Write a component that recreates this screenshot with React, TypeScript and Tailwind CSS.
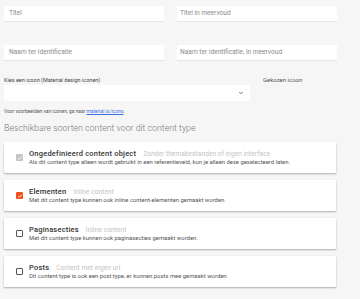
import React from "react";

const font = { fontFamily: "Roboto, 'Noto Sans', sans-serif" };

function Check({ state }: { state: "disabled" | "on" | "off" }) {
  if (state === "off")
    return <div className="w-[7px] h-[7px] border border-[#555] rounded-[1px] bg-white shrink-0" />;
  const bg = state === "on" ? "bg-[#f4511e]" : "bg-[#c4c4c4]";
  return (
    <div className={`w-[7px] h-[7px] ${bg} rounded-[1px] shrink-0 flex items-center justify-center`}>
      <svg width="6" height="6" viewBox="0 0 24 24">
        <path d="M4 12.5l5 5L20 6.5" fill="none" stroke="white" strokeWidth="3.5" />
      </svg>
    </div>
  );
}

function Card({
  state,
  title,
  sub,
  desc,
}: {
  state: "disabled" | "on" | "off";
  title: string;
  sub: string;
  desc: string;
}) {
  return (
    <div className="bg-white h-[31px] flex items-center shadow-[0_1px_2px_rgba(0,0,0,0.3)] rounded-[1px]">
      <div className="w-[25px] pl-[12px] flex items-center">
        <Check state={state} />
      </div>
      <div className="flex flex-col">
        <div className="flex items-baseline h-[9px] leading-[9px]">
          <span className="text-[7.5px] font-medium text-[#333] tracking-[0.2px]">{title}</span>
          <span className="text-[6.5px] text-[#c2c2c2] ml-[7px] tracking-[0.1px]">{sub}</span>
        </div>
        <div className="text-[5.9px] text-[#555] leading-[8px] mt-[0px]">{desc}</div>
      </div>
    </div>
  );
}

export default function App() {
  return (
    <div className="w-[360px] h-[299px] bg-[#f6f6f6] overflow-hidden" style={font}>
      <div className="pl-[4px] w-[336px] pt-[6px]">
        <div className="grid grid-cols-[160px_160px] gap-x-[13px]">
          <div className="h-[16px] bg-white border-b border-[#e6e6e6] flex items-center pl-[5px] text-[6.6px] text-[#8a8a8a]">
            Titel
          </div>
          <div className="h-[16px] bg-white border-b border-[#e6e6e6] flex items-center pl-[3px] text-[6.6px] text-[#8a8a8a]">
            Titel in meervoud
          </div>
        </div>
        <div className="grid grid-cols-[160px_160px] gap-x-[13px] mt-[23px]">
          <div className="h-[16px] bg-white border-b border-[#e6e6e6] flex items-center pl-[5px] text-[6.6px] text-[#8a8a8a]">
            Naam ter identificatie
          </div>
          <div className="h-[16px] bg-white border-b border-[#e6e6e6] flex items-center pl-[3px] text-[6.6px] text-[#8a8a8a]">
            Naam ter identificatie, in meervoud
          </div>
        </div>
        <div className="flex mt-[15px]">
          <div className="w-[246px]">
            <div className="text-[5.5px] text-[#444] leading-[8px] h-[8px]">
              Kies een icoon (Material design iconen)
            </div>
            <div className="h-[16px] bg-white mt-[1px] flex items-center justify-end pr-[6px]">
              <svg width="6" height="6" viewBox="0 0 24 24">
                <path d="M5 8l7 7 7-7" fill="none" stroke="#444" strokeWidth="3" />
              </svg>
            </div>
          </div>
          <div className="ml-[13px] text-[6px] text-[#555] leading-[8px]">Gekozen icoon</div>
        </div>
        <div className="text-[4.9px] text-[#555] leading-[8px] mt-[6px]">
          Voor voorbeelden van iconen, ga naar{" "}
          <span className="text-[#3b6fe0] underline">material.io/icons</span>.
        </div>
        <div className="text-[8.8px] font-light text-[#7a7a7a] leading-[12px] mt-[7px]">
          Beschikbare soorten content voor dit content type
        </div>
        <div className="flex flex-col gap-[7px] mt-[8px]">
          <Card
            state="disabled"
            title="Ongedefinieerd content object"
            sub="Zonder themabestanden of eigen interface"
            desc="Als dit content type alleen wordt gebruikt in een referentieveld, kun je alleen deze geselecteerd laten."
          />
          <Card
            state="on"
            title="Elementen"
            sub="Inline content"
            desc="Met dit content type kunnen ook inline content-elementen gemaakt worden."
          />
          <Card
            state="off"
            title="Paginasecties"
            sub="Inline content"
            desc="Met dit content type kunnen ook paginasecties gemaakt worden."
          />
          <Card
            state="off"
            title="Posts"
            sub="Content met eigen url"
            desc="Dit content type is ook een post type, er kunnen posts mee gemaakt worden."
          />
        </div>
      </div>
    </div>
  );
}
